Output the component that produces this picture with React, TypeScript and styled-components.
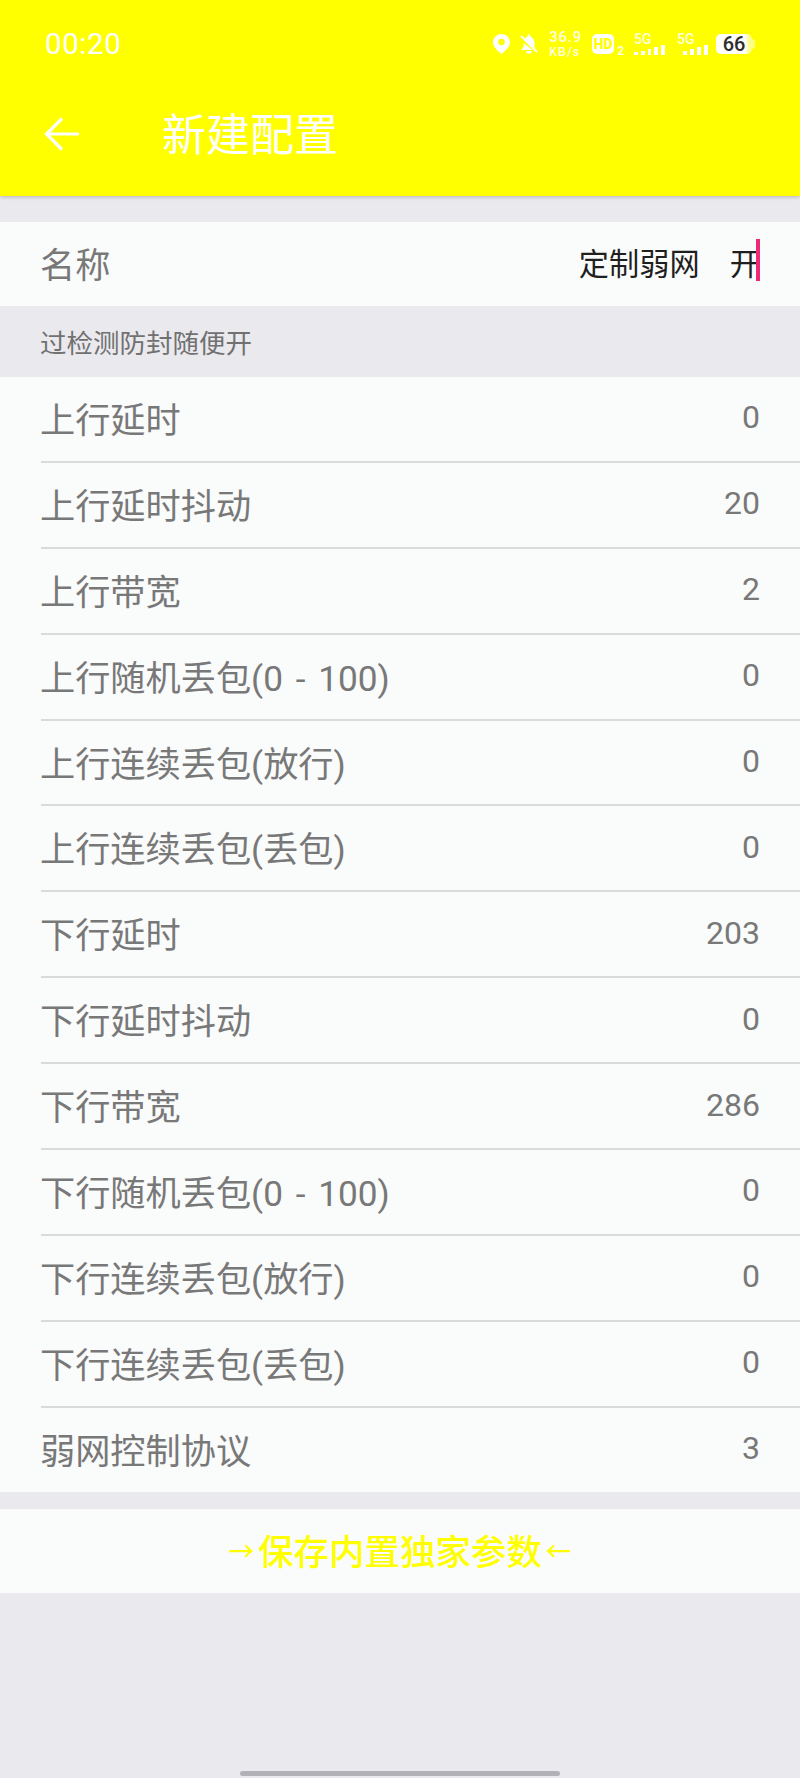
import styled, { createGlobalStyle } from 'styled-components';

const FONT = `Roboto, "Noto Sans CJK SC", sans-serif`;

const GlobalStyle = createGlobalStyle`
	html, body {
		margin: 0;
		padding: 0;
		background: #e9e9ee;
		font-family: ${FONT};
	}
`;

const Page = styled.div`
	width: 800px;
	height: 1778px;
	position: relative;
	overflow: hidden;
	background: #e9e9ee;
`;

const Header = styled.header`
	height: 196px;
	background: #ffff00;
	box-shadow: 0 1px 4px rgba(0, 0, 0, 0.22);
`;

const StatusBar = styled.div`
	height: 88px;
	display: flex;
	align-items: center;
	justify-content: space-between;
	padding: 0 45px;
	color: #fff;
`;

const Clock = styled.span`
	font-size: 29.5px;
	letter-spacing: 0.6px;
`;

const StatusIcons = styled.div`
	display: flex;
	align-items: center;
`;

const Speed = styled.div`
	display: flex;
	flex-direction: column;
	width: 34px;
	margin: 0 9px 0 11px;
	font-weight: 500;
	color: rgba(255, 255, 255, 0.9);
`;

const SpeedValue = styled.span`
	font-size: 15px;
	line-height: 15px;
	letter-spacing: 0.8px;
`;

const SpeedUnit = styled.span`
	font-size: 12.5px;
	line-height: 13px;
	letter-spacing: 1px;
`;

const Hd = styled.span`
	width: 22px;
	height: 20px;
	display: flex;
	align-items: center;
	justify-content: center;
	border-radius: 5px;
	background: #fff;
	color: #ffff00;
	font-size: 14px;
	font-weight: 900;
`;

const SimIndex = styled.span`
	align-self: flex-end;
	margin: 0 10px 0 3px;
	font-size: 12px;
	line-height: 13px;
	font-weight: 500;
`;

const Signal = styled.div<{ $gap: number }>`
	width: 31px;
	margin-right: ${(p) => p.$gap}px;
	display: flex;
	flex-direction: column;
	font-size: 14px;
	line-height: 12px;
	font-weight: 500;
	color: rgba(255, 255, 255, 0.9);
`;

const Bars = styled.div`
	display: flex;
	align-items: flex-end;
	justify-content: flex-end;
	gap: 3px;
	height: 10px;
`;

const Bar = styled.i<{ $h: number }>`
	display: block;
	width: 4px;
	height: ${(p) => p.$h}px;
	background: #fff;
`;

const Battery = styled.div`
	display: flex;
	align-items: center;
`;

const BatteryBody = styled.span`
	width: 36px;
	height: 20px;
	display: flex;
	align-items: center;
	justify-content: center;
	border-radius: 5px;
	background: linear-gradient(90deg, #fff 80%, rgba(255, 255, 255, 0.55) 92%);
	color: #2d2d2d;
	font-size: 20px;
	font-weight: 500;
`;

const BatteryTip = styled.span`
	width: 3px;
	height: 10px;
	border-radius: 0 3px 3px 0;
	background: rgba(255, 255, 255, 0.5);
`;

const Toolbar = styled.div`
	height: 92px;
	display: flex;
	align-items: center;
	padding-left: 44px;
	color: #fff;
`;

const Title = styled.h1`
	margin: 3px 0 0 82px;
	font-size: 44px;
	font-weight: 400;
	line-height: 92px;
`;

const Row = styled.div`
	height: 85.9px;
	box-sizing: border-box;
	margin-left: 41px;
	padding-right: 40px;
	display: flex;
	align-items: center;
	justify-content: space-between;
	border-bottom: 2px solid #d9dbdb;

	&:last-child {
		height: 84px;
		border-bottom: none;
	}
`;

const Card = styled.section`
	background: #fafbfb;
`;

const NameCard = styled(Card)`
	margin-top: 26px;
	height: 84px;
	display: flex;
	align-items: center;
	justify-content: space-between;
	padding: 0 40px 0 41px;
`;

const Label = styled.span`
	margin-left: -1px;
	padding-bottom: 3px;
	font-size: 35.2px;
	font-weight: 400;
	word-spacing: 4px;
	color: #787878;
`;

const Value = styled.span`
	padding-bottom: 3px;
	font-size: 32px;
	font-weight: 400;
	color: #787878;
`;

const NameInput = styled.span`
	position: relative;
	padding-bottom: 5px;
	font-size: 30.2px;
	font-weight: 400;
	color: #1f1f1f;
	white-space: pre;
`;

const Cursor = styled.i`
	position: absolute;
	right: 0;
	top: -1px;
	width: 4px;
	height: 42px;
	background: #ec2a75;
`;

const Hint = styled.div`
	height: 71px;
	display: flex;
	align-items: center;
	padding-left: 40px;
	font-size: 26.5px;
	font-weight: 400;
	color: #717171;
`;

const SaveCard = styled(Card)`
	margin-top: 17px;
	height: 84px;
	padding-bottom: 2px;
	box-sizing: border-box;
	display: flex;
	align-items: center;
	justify-content: center;
	font-size: 35.5px;
	font-weight: 500;
	color: #ffff00;
`;

const SaveArrow = styled.span`
	width: 33px;
	text-align: center;
	font-size: 26px;
	font-weight: 500;
`;

const HomeBar = styled.div`
	position: absolute;
	left: 240px;
	bottom: 2px;
	width: 320px;
	height: 5px;
	border-radius: 3px;
	background: #b3b1b8;
`;

const params: [string, string][] = [
	['上行延时', '0'],
	['上行延时抖动', '20'],
	['上行带宽', '2'],
	['上行随机丢包(0 - 100)', '0'],
	['上行连续丢包(放行)', '0'],
	['上行连续丢包(丢包)', '0'],
	['下行延时', '203'],
	['下行延时抖动', '0'],
	['下行带宽', '286'],
	['下行随机丢包(0 - 100)', '0'],
	['下行连续丢包(放行)', '0'],
	['下行连续丢包(丢包)', '0'],
	['弱网控制协议', '3'],
];

const SignalBlock = ({ levels, gap }: { levels: number[]; gap: number }) => (
	<Signal $gap={gap}>
		<span>5G</span>
		<Bars>
			{levels.map((h, i) => (
				<Bar key={i} $h={h} />
			))}
		</Bars>
	</Signal>
);

const App = () => (
	<Page>
		<GlobalStyle />
		<Header>
			<StatusBar>
				<Clock>00:20</Clock>
				<StatusIcons>
					<svg width="17" height="20" viewBox="0 0 17 20" fill="#fff">
						<path
							fillRule="evenodd"
							d="M8.500 0C3.800 0 0 3.700 0 8.200 0 12.800 4.800 17 8.500 20c3.700-3 8.500-7.200 8.500-11.800C17 3.700 13.200 0 8.500 0zm0 11.200a3.200 3.200 0 1 1 0-6.400 3.200 3.200 0 0 1 0 6.400z"
						/>
					</svg>
					<svg width="18" height="20" viewBox="0 0 18 20" fill="#fff" style={{ marginLeft: 10 }}>
						<path d="M9 0.500c-.9 0-1.500.7-1.500 1.500v.8C5.500 3.300 4.300 4.500 3.800 6L14.500 15.500V9.500C14.500 6 13 3.700 10.500 2.800V2C10.500 1.200 9.900.5 9 .5zM3.500 9v4.200L1 16h11.500zM6.200 17a2.800 2.800 0 0 0 5.600 0z" />
						<path d="M1 2l16 16" stroke="#fff" strokeWidth="1.800" />
					</svg>
					<Speed>
						<SpeedValue>36.9</SpeedValue>
						<SpeedUnit>KB/s</SpeedUnit>
					</Speed>
					<Hd>HD</Hd>
					<SimIndex>2</SimIndex>
					<SignalBlock levels={[3, 4, 6, 8, 10]} gap={12} />
					<SignalBlock levels={[4, 6, 8, 10]} gap={8} />
					<Battery>
						<BatteryBody>66</BatteryBody>
						<BatteryTip />
					</Battery>
				</StatusIcons>
			</StatusBar>
			<Toolbar>
				<svg width="36" height="36" viewBox="0 0 36 36" fill="none" stroke="#fff" strokeWidth="3.200">
					<path d="M35 18H3M18 2.500 2.500 18 18 33.500" />
				</svg>
				<Title>新建配置</Title>
			</Toolbar>
		</Header>

		<NameCard>
			<Label>名称</Label>
			<NameInput>
				定制弱网　开
				<Cursor />
			</NameInput>
		</NameCard>

		<Hint>过检测防封随便开</Hint>

		<Card>
			{params.map(([label, value]) => (
				<Row key={label}>
					<Label>{label}</Label>
					<Value>{value}</Value>
				</Row>
			))}
		</Card>

		<SaveCard>
			<SaveArrow>→</SaveArrow>
			保存内置独家参数
			<SaveArrow>←</SaveArrow>
		</SaveCard>
		<HomeBar />
	</Page>
);

export default App;
